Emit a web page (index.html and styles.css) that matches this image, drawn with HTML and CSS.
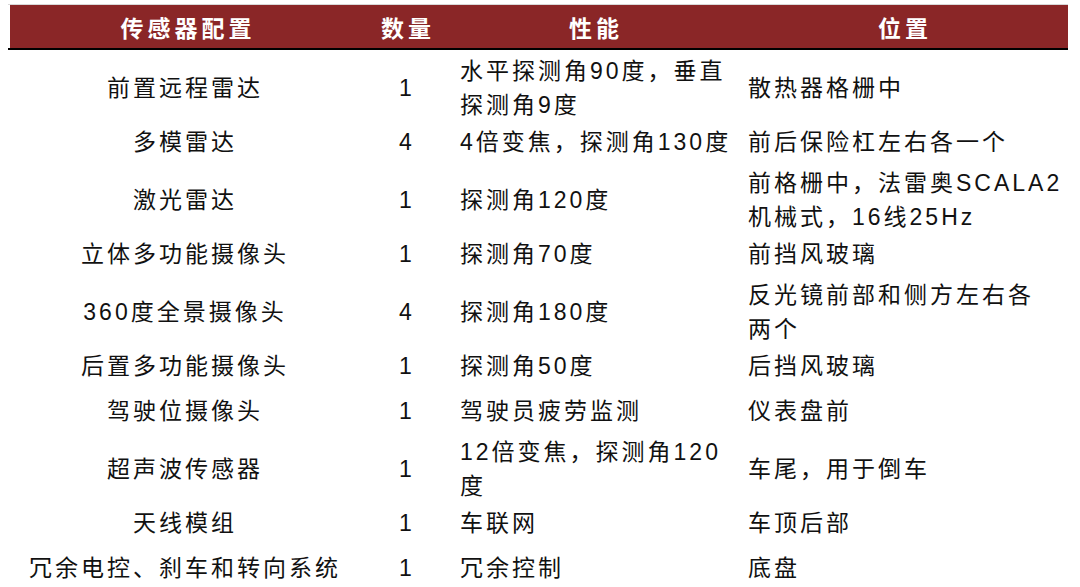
FILE: index.html
```html
<!DOCTYPE html>
<html lang="zh-CN">
<head>
<meta charset="utf-8">
<title>传感器配置</title>
<link rel="stylesheet" href="styles.css">
</head>
<body>
<div class="table">
  <div class="row head">
    <div class="cell c1">传感器配置</div>
    <div class="cell c2">数量</div>
    <div class="cell c3">性能</div>
    <div class="cell c4">位置</div>
  </div>
  <div class="row d">
    <div class="cell c1">前置远程雷达</div>
    <div class="cell c2">1</div>
    <div class="cell c3">水平探测角90度，垂直<br>探测角9度</div>
    <div class="cell c4">散热器格栅中</div>
  </div>
  <div class="row s">
    <div class="cell c1">多模雷达</div>
    <div class="cell c2">4</div>
    <div class="cell c3">4倍变焦，探测角130度</div>
    <div class="cell c4">前后保险杠左右各一个</div>
  </div>
  <div class="row d">
    <div class="cell c1">激光雷达</div>
    <div class="cell c2">1</div>
    <div class="cell c3">探测角120度</div>
    <div class="cell c4">前格栅中，法雷奥SCALA2<br>机械式，16线25Hz</div>
  </div>
  <div class="row s">
    <div class="cell c1">立体多功能摄像头</div>
    <div class="cell c2">1</div>
    <div class="cell c3">探测角70度</div>
    <div class="cell c4">前挡风玻璃</div>
  </div>
  <div class="row d">
    <div class="cell c1">360度全景摄像头</div>
    <div class="cell c2">4</div>
    <div class="cell c3">探测角180度</div>
    <div class="cell c4">反光镜前部和侧方左右各<br>两个</div>
  </div>
  <div class="row s">
    <div class="cell c1">后置多功能摄像头</div>
    <div class="cell c2">1</div>
    <div class="cell c3">探测角50度</div>
    <div class="cell c4">后挡风玻璃</div>
  </div>
  <div class="row s">
    <div class="cell c1">驾驶位摄像头</div>
    <div class="cell c2">1</div>
    <div class="cell c3">驾驶员疲劳监测</div>
    <div class="cell c4">仪表盘前</div>
  </div>
  <div class="row d">
    <div class="cell c1">超声波传感器</div>
    <div class="cell c2">1</div>
    <div class="cell c3">12倍变焦，探测角120<br>度</div>
    <div class="cell c4">车尾，用于倒车</div>
  </div>
  <div class="row s">
    <div class="cell c1">天线模组</div>
    <div class="cell c2">1</div>
    <div class="cell c3">车联网</div>
    <div class="cell c4">车顶后部</div>
  </div>
  <div class="row s">
    <div class="cell c1">冗余电控、刹车和转向系统</div>
    <div class="cell c2">1</div>
    <div class="cell c3">冗余控制</div>
    <div class="cell c4">底盘</div>
  </div>
</div>
</body>
</html>
```
FILE: styles.css
```css
html, body {
  margin: 0;
  padding: 0;
  background: #ffffff;
}

body {
  font-family: "Liberation Sans", "Noto Sans CJK SC", sans-serif;
  font-size: 23px;
  letter-spacing: 3px;
  color: #111111;
  overflow: hidden;
}

.table {
  margin: 5px 0 0 8px;
  width: 1060px;
}

.row {
  display: grid;
  grid-template-columns: 354px 88px 288px 330px;
}

.row.head {
  height: 43px;
  border-top: 1px solid #d8d8d8;
  border-bottom: 2px solid #000000;
  margin-top: -1px;
}

.row.head .cell {
  background: #8a2627;
  color: #ffffff;
  font-weight: bold;
  justify-content: center;
  letter-spacing: 4px;
  padding: 6px 0 0 4px;
}

.row.head .c1 {
  margin-left: 2px;
}

.row.s {
  height: 45px;
}

.row.d {
  height: 67px;
}

.cell {
  display: flex;
  align-items: center;
  line-height: 33px;
  padding-top: 6px;
  white-space: nowrap;
}

.row.d .cell {
  padding-top: 4px;
  line-height: 34px;
}

.c1,
.c2 {
  justify-content: center;
  text-align: center;
}

.c2 {
  padding-left: 2px;
}

.c3 {
  padding-left: 10px;
}

.c4 {
  padding-left: 10px;
}
```
